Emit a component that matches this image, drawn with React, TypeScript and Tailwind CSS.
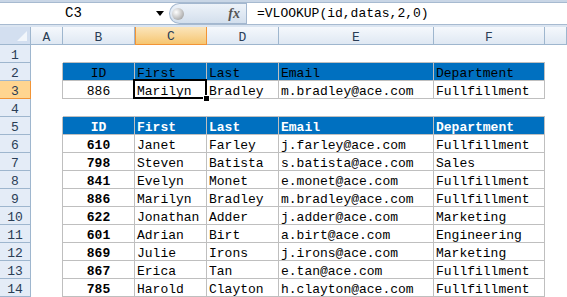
import React from 'react';

type Row = {
  n: number;
  kind: 'empty' | 'line' | 'head' | 'headBold' | 'data' | 'dataBold';
  cells?: string[];
};

const rows: Row[] = [
  { n: 1, kind: 'line' },
  { n: 2, kind: 'head', cells: ['ID', 'First', 'Last', 'Email', 'Department'] },
  { n: 3, kind: 'data', cells: ['886', 'Marilyn', 'Bradley', 'm.bradley@ace.com', 'Fullfillment'] },
  { n: 4, kind: 'line' },
  { n: 5, kind: 'headBold', cells: ['ID', 'First', 'Last', 'Email', 'Department'] },
  { n: 6, kind: 'dataBold', cells: ['610', 'Janet', 'Farley', 'j.farley@ace.com', 'Fullfillment'] },
  { n: 7, kind: 'dataBold', cells: ['798', 'Steven', 'Batista', 's.batista@ace.com', 'Sales'] },
  { n: 8, kind: 'dataBold', cells: ['841', 'Evelyn', 'Monet', 'e.monet@ace.com', 'Fullfillment'] },
  { n: 9, kind: 'dataBold', cells: ['886', 'Marilyn', 'Bradley', 'm.bradley@ace.com', 'Fullfillment'] },
  { n: 10, kind: 'dataBold', cells: ['622', 'Jonathan', 'Adder', 'j.adder@ace.com', 'Marketing'] },
  { n: 11, kind: 'dataBold', cells: ['601', 'Adrian', 'Birt', 'a.birt@ace.com', 'Engineering'] },
  { n: 12, kind: 'dataBold', cells: ['869', 'Julie', 'Irons', 'j.irons@ace.com', 'Marketing'] },
  { n: 13, kind: 'dataBold', cells: ['867', 'Erica', 'Tan', 'e.tan@ace.com', 'Fullfillment'] },
  { n: 14, kind: 'dataBold', cells: ['785', 'Harold', 'Clayton', 'h.clayton@ace.com', 'Fullfillment'] },
];

const widths = ['w-[72px]', 'w-[72px]', 'w-[72px]', 'w-[155px]', 'w-[111px]'];

function ColHeader() {
  const cols = [
    { k: 'A', w: 'w-[32px]' },
    { k: 'B', w: 'w-[72px]' },
    { k: 'C', w: 'w-[72px]' },
    { k: 'D', w: 'w-[72px]' },
    { k: 'E', w: 'w-[155px]' },
    { k: 'F', w: 'w-[111px]' },
    { k: '', w: 'w-[22px]' },
  ];
  return (
    <div className="flex h-[18px] shrink-0">
      <div className="relative w-[31px] shrink-0 bg-[#d3dff0] border-r border-b border-[#9eb6ce]">
        <svg className="absolute right-[3px] bottom-[3px]" width="10" height="10" viewBox="0 0 10 10">
          <polygon points="10,0 10,10 0,10" fill="#f2f6fb" />
        </svg>
      </div>
      {cols.map((c, i) =>
        c.k === 'C' ? (
          <div
            key={i}
            className={`${c.w} shrink-0 flex items-start justify-center pt-[3px] leading-[13px] text-[13px] text-[#2a3d55] bg-gradient-to-b from-[#fbe5bb] to-[#f6c670] border border-t-0 border-[#f29436]`}
          >
            {c.k}
          </div>
        ) : (
          <div
            key={i}
            className={`${c.w} shrink-0 flex items-start justify-center pt-[4px] leading-[13px] text-[13px] text-[#2a3d55] bg-gradient-to-b from-[#f5f8fc] to-[#dfe8f3] border-r border-b border-[#9eb6ce]`}
          >
            {c.k}
          </div>
        ),
      )}
    </div>
  );
}

function RowHead({ n }: { n: number }) {
  if (n === 3) {
    return (
      <div className="w-[31px] shrink-0 flex justify-center pt-[4px] leading-[13px] text-[13px] text-[#2a3d55] bg-[#ffd590] border-r border-b border-[#f29436]">
        {n}
      </div>
    );
  }
  return (
    <div className="w-[31px] shrink-0 flex justify-center pt-[4px] leading-[13px] text-[13px] text-[#2a3d55] bg-[#e4ecf7] border-r border-b border-[#9eb6ce]">
      {n}
    </div>
  );
}

function SheetRow({ row }: { row: Row }) {
  const inTable = row.kind !== 'empty' && row.kind !== 'line';
  return (
    <div className="flex h-[18px] shrink-0">
      <RowHead n={row.n} />
      <div
        className={
          inTable
            ? 'w-[32px] shrink-0 border-r border-[#bfbfbf]'
            : 'w-[32px] shrink-0'
        }
      />
      {widths.map((w, i) => {
        if (!inTable) {
          return (
            <div
              key={i}
              className={`${w} shrink-0 ${row.kind === 'line' ? 'border-b border-[#bfbfbf]' : ''}`}
            />
          );
        }
        const text = row.cells![i];
        const isHead = row.kind === 'head' || row.kind === 'headBold';
        const center = i === 0;
        let cls = `${w} shrink-0 relative border-r border-b border-[#bfbfbf] pt-[4px] leading-[13px] whitespace-nowrap`;
        if (isHead) cls += ' bg-[#0070c0]';
        if (row.kind === 'headBold') cls += ' text-white font-bold';
        if (row.kind === 'dataBold' && i === 0) cls += ' font-bold';
        cls += center ? ' text-center' : ' pl-[2px]';
        const selected = row.n === 3 && i === 1;
        return (
          <div key={i} className={cls + (selected ? ' z-10' : '')}>
            {text}
            {selected && (
              <>
                <div className="absolute -left-[2px] -top-[2px] -right-[1px] -bottom-[1px] border-2 border-black" />
                <div className="absolute -right-[4px] -bottom-[4px] w-[7px] h-[7px] bg-black border border-white" />
              </>
            )}
          </div>
        );
      })}
      <div className="w-[22px] shrink-0" />
    </div>
  );
}

function FormulaBar() {
  return (
    <div className="flex flex-col shrink-0">
      <div className="h-[2px] bg-[#c9d6e6]" />
      <div className="flex h-[23px] bg-white border-y border-[#a7bad0]">
        <div className="w-[147px] shrink-0 flex justify-center pt-[3px] leading-[15px] text-[14px] text-black">
          C3
        </div>
        <div className="w-[22px] shrink-0 flex items-center justify-start pl-[9px]">
          <svg width="8" height="5" viewBox="0 0 8 5">
            <polygon points="0,0 8,0 4,5" fill="#000" />
          </svg>
        </div>
        <div className="w-[77px] shrink-0 flex items-center justify-between rounded-l-full bg-gradient-to-b from-[#eef3f9] to-[#d3dfed] border border-r-0 border-[#a3b7cf] pl-[2px] pr-[6px]">
          <div className="w-[12px] h-[12px] rounded-full bg-radial-[at_35%_35%] from-white via-[#c8c8c8] to-[#8c8c8c]" />
          <span className="font-['Liberation_Serif',serif] italic font-bold text-[14px] leading-[14px] text-[#555]">
            fx
          </span>
        </div>
        <div className="flex-1 border-l border-[#a3b7cf] pl-[10px] pt-[3px] leading-[15px] text-[13px] text-black whitespace-nowrap">
          =VLOOKUP(id,datas,2,0)
        </div>
      </div>
      <div className="h-[2px] bg-[#dbe5f1]" />
    </div>
  );
}

export default function App() {
  return (
    <div className="w-[567px] h-[297px] overflow-hidden bg-white flex flex-col font-['Liberation_Mono',monospace] text-[13px] text-black">
      <FormulaBar />
      <ColHeader />
      {rows.map((r) => (
        <SheetRow key={r.n} row={r} />
      ))}
    </div>
  );
}
